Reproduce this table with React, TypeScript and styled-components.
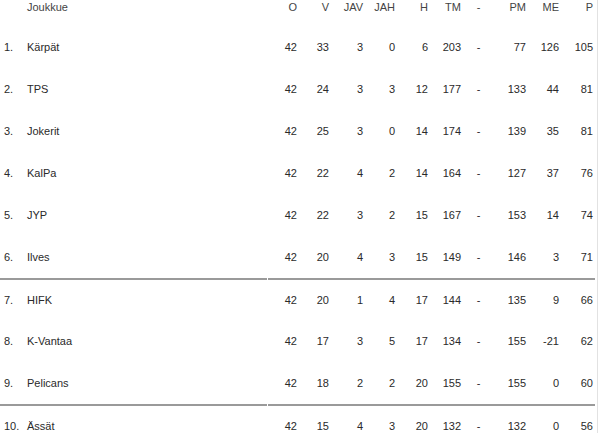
import React from "react";
import styled, { createGlobalStyle } from "styled-components";

const Global = createGlobalStyle`
  html, body { margin: 0; padding: 0; background: #fff; }
  body { font-family: "Liberation Sans", Arial, sans-serif; font-size: 11px; color: #2a2a2a; }
`;

const Page = styled.div`
  width: 597px;
  height: 433px;
  border-right: 1px solid #e2e2e2;
  overflow: hidden;
`;

const Row = styled.div<{ $header?: boolean }>`
  display: flex;
  gap: 1px;
  height: ${(p) => (p.$header ? "26px" : "42px")};
  align-items: stretch;
  color: ${(p) => (p.$header ? "#444" : "#2a2a2a")};
  line-height: 14px;
`;

const Group = styled.div<{ $divider?: boolean; $header?: boolean }>`
  display: flex;
  align-items: ${(p) => (p.$header ? "flex-start" : "center")};
  box-sizing: border-box;
  border-top: ${(p) => (p.$divider ? "2px solid #9a9a9a" : "none")};
  padding-bottom: ${(p) => (p.$divider ? "1px" : "0")};
`;

const TeamGroup = styled(Group)`
  width: 267px;
  padding-left: 4px;
`;

const StatGroup = styled(Group)`
  width: 327px;
  padding-right: 2px;
  display: grid;
  grid-template-columns: 29px 32px 34px 32px 33px 33px 35px 30px 33px 34px;
`;

const Rank = styled.span`
  width: 23px;
`;

const Name = styled.span``;

const Cell = styled.span<{ $center?: boolean }>`
  text-align: ${(p) => (p.$center ? "center" : "right")};
`;

type Team = [string, string, number, number, number, number, number, number, number, number, number];

const teams: Team[] = [
  ["1.", "Kärpät", 42, 33, 3, 0, 6, 203, 77, 126, 105],
  ["2.", "TPS", 42, 24, 3, 3, 12, 177, 133, 44, 81],
  ["3.", "Jokerit", 42, 25, 3, 0, 14, 174, 139, 35, 81],
  ["4.", "KalPa", 42, 22, 4, 2, 14, 164, 127, 37, 76],
  ["5.", "JYP", 42, 22, 3, 2, 15, 167, 153, 14, 74],
  ["6.", "Ilves", 42, 20, 4, 3, 15, 149, 146, 3, 71],
  ["7.", "HIFK", 42, 20, 1, 4, 17, 144, 135, 9, 66],
  ["8.", "K-Vantaa", 42, 17, 3, 5, 17, 134, 155, -21, 62],
  ["9.", "Pelicans", 42, 18, 2, 2, 20, 155, 155, 0, 60],
  ["10.", "Ässät", 42, 15, 4, 3, 20, 132, 132, 0, 56],
];

const headers = ["O", "V", "JAV", "JAH", "H", "TM", "-", "PM", "ME", "P"];

export default function App() {
  return (
    <>
      <Global />
      <Page>
        <Row $header>
          <TeamGroup $header>
            <Rank />
            <Name>Joukkue</Name>
          </TeamGroup>
          <StatGroup $header>
            {headers.map((h, i) => (
              <Cell key={i} $center={h === "-"}>
                {h}
              </Cell>
            ))}
          </StatGroup>
        </Row>
        {teams.map((t, idx) => {
          const divider = idx === 6 || idx === 9;
          const [rank, name, o, v, jav, jah, h, tm, pm, me, p] = t;
          const vals: (number | string)[] = [o, v, jav, jah, h, tm, "-", pm, me, p];
          return (
            <Row key={name}>
              <TeamGroup $divider={divider}>
                <Rank>{rank}</Rank>
                <Name>{name}</Name>
              </TeamGroup>
              <StatGroup $divider={divider}>
                {vals.map((val, i) => (
                  <Cell key={i} $center={i === 6}>
                    {val}
                  </Cell>
                ))}
              </StatGroup>
            </Row>
          );
        })}
      </Page>
    </>
  );
}
